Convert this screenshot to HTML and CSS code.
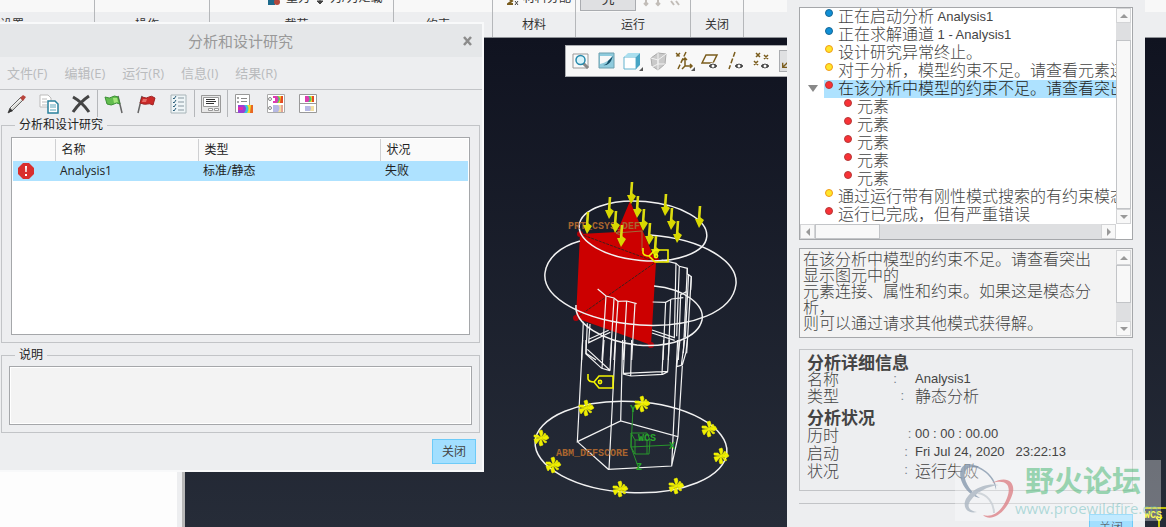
FILE: index.html
```
<!DOCTYPE html>
<html lang="zh-CN">
<head>
    <meta charset="UTF-8">
    <meta name="viewport" content="width=device-width, initial-scale=1.0">
    <title>分析和设计研究</title>
    <link rel="stylesheet" href="styles.css">
</head>
<body>
    <div class="app">
        <header class="ribbon">
            <section class="group group-setup">
                <div class="group-body"></div>
                <div class="group-label">设置</div>
            </section>
            <section class="group group-operate">
                <div class="group-body"></div>
                <div class="group-label">操作</div>
            </section>
            <section class="group group-load">
                <div class="group-body">
                    <svg width="12" height="10" viewBox="0 0 12 10"><path d="M0 3h7v6H0z" fill="#1d6a8c"/><circle cx="9" cy="6" r="3" fill="#b3483c"/></svg>
                    <span>重力</span>
                    <svg width="8" height="10" viewBox="0 0 8 10"><path d="M4 0v6M1 5l3 3 3-3z" stroke="#444" fill="#444"/></svg>
                    <span>力/力矩载</span>
                </div>
                <div class="group-label">载荷</div>
            </section>
            <section class="group group-constraint">
                <div class="group-body"></div>
                <div class="group-label">约束</div>
            </section>
            <section class="group group-material">
                <div class="group-body">
                    <svg width="12" height="10" viewBox="0 0 12 10"><path d="M1 2l4 3-4 3h5" stroke="#7a5c1c" stroke-width="2" fill="none"/><path d="M8 5l3 4M11 5L8 9" stroke="#444"/></svg>
                    <span>材料分配</span>
                </div>
                <div class="group-label">材料</div>
            </section>
            <section class="group group-run">
                <div class="group-body">
                    <button type="button" class="run-button">究</button>
                    <svg width="40" height="10" viewBox="0 0 40 10"><path d="M4 0v5M2 3l2 2 2-2M16 0v5M14 3l2 2 2-2M29 1l3 4M34 1l3 4" stroke="#c2bdb8" stroke-width="2" fill="none"/></svg>
                </div>
                <div class="group-label">运行</div>
            </section>
            <section class="group group-close">
                <div class="group-body"></div>
                <div class="group-label">关闭</div>
            </section>
            <section class="group group-rest">
                <div class="group-body"></div>
                <div class="group-label"></div>
            </section>
        </header>

        <main class="workspace">
            <aside class="model-tree"></aside>
            <div class="viewport">
                <svg class="scene" viewBox="185 38 981 489" preserveAspectRatio="xMinYMin slice">
                    <defs>
                        <g id="load">
                            <path d="M1-21L0-7" stroke="#dcdc10" stroke-width="2.6"/>
                            <path d="M-4-8L0 1l5-8-4-3-1 2z" fill="#d8d800"/>
                        </g>
                        <g id="fixed">
                            <path d="M0 0L-2-7l3-1 1 3zM0 0l6-3 2 3-3 2zM0 0l2 7-3 1-1-3zM0 0l-6 4-1-3zM0 0l-7-1 0-2 4 0zM0 0l6 4-2 1zM0 0l-5 6-1-2zM0 0l4-5 1 2z" fill="#f0f000" stroke="#f0f000" stroke-width=".6"/>
                        </g>
                    </defs>

                    <!-- stressed faces -->
                    <path d="M580 234L617 232 630 201 656 262 651 345 576 318z" fill="#cc0000"/>
                    <path d="M580 234l76 28M576 318l80-56" stroke="#40201c" stroke-dasharray="3 1" fill="none"/>
                    <g fill="#b00008">
                        <circle cx="580" cy="234" r="3"/>
                        <circle cx="576" cy="318" r="3"/>
                        <circle cx="651" cy="345" r="3"/>
                        <circle cx="656" cy="260" r="3"/>
                    </g>

                    <!-- collar edges -->
                    <g fill="none" stroke="#f2f2f2" stroke-width="1.5">
                        <ellipse cx="643" cy="231" rx="64" ry="29.5" transform="rotate(5 643 231)"/>
                        <path d="M650 235C704 239 738 262 736 284C733 312 692 328 640 325C584 321 542 298 545 273C547 257 562 246 580 241"/>
                        <path d="M654 286C685 289 705 305 702 320C698 337 672 348 637 345C603 341 574 324 576 305"/>
                        <ellipse cx="631" cy="447" rx="96" ry="45.5" transform="rotate(3 631 447)"/>
                    </g>

                    <!-- upper body -->
                    <g fill="none" stroke="#f2f2f2" stroke-width="3.6" transform="translate(530 170) scale(.3333)">
                        <path d="M203 357l25 21 24 6 12 10 26-1 30 8M395 270l43 10 10 9 24 6v17l12 8-2 40"/>
                        <path d="M438 280l-5 225M448 289l-8 210M472 295l-12 255M484 320l-14 230M476 312l-10 190"/>
                        <path d="M228 378l-12 192M252 386l-11 184M264 394l-12 176M290 393l-10 177M315 401l-10 169"/>
                        <path d="M368 396l39 1 18-10 35-4M407 397l-8 173M422 388l-7 182M452 375l-7 195"/>
                        <path d="M160 455l-5 115M172 460l-4 90 30 20M180 462l-4 56 65-31M176 508l60-27M366 480l68 23M366 489l68 22M450 375l20-10"/>
                    </g>

                    <!-- lower body -->
                    <g fill="none" stroke="#f2f2f2" stroke-width="3.6" transform="translate(520 340) scale(.3333)">
                        <path d="M188 0L172 305 302 243 474 290 455 378 265 388 172 305M287 0L267 388M308 0L302 243M473 0L455 378M487 78L474 290"/>
                        <path d="M198 0v42l47 43 25 7M202 28l67 62M252 0l-6 85M275 0l-5 92"/>
                        <path d="M315 0l-5 102 23 6 95-5 16-8M335 0l-3 108M312 100l130-6M431 0l-5 102M448 0l-5 95"/>
                        <path d="M480 0l-10 80 17-5 11-38 4-37M494 0l-10 76"/>
                    </g>

                    <g class="csys">
                        <text x="568" y="229">PRT_CSYS_DEF</text>
                        <text x="556" y="456">ABM_DEFSCORE</text>
                    </g>
                    <path d="M642 251v-20l-26 2M622 230l-6 3 6 3" fill="none" stroke="#a06a38"/>

                    <!-- world coordinate system -->
                    <g fill="none" stroke="#28962c">
                        <path d="M633 408l-2 39 40-2M631 447l8 22M631 433h16l3 7-1 14h-14l-4-7zM635 440h12v14M635 440v14M631 433l4 7"/>
                    </g>
                    <g class="wcs">
                        <text x="638" y="441">WCS</text>
                        <text x="630" y="412">Y</text>
                        <text x="669" y="449">X</text>
                        <text x="636" y="470">Z</text>
                    </g>

                    <use href="#load" x="631" y="203"/>
                    <use href="#load" x="609" y="218"/>
                    <use href="#load" x="637" y="217"/>
                    <use href="#load" x="665" y="215"/>
                    <use href="#load" x="587" y="233"/>
                    <use href="#load" x="615" y="232"/>
                    <use href="#load" x="643" y="230"/>
                    <use href="#load" x="671" y="229"/>
                    <use href="#load" x="699" y="227"/>
                    <use href="#load" x="621" y="246"/>
                    <use href="#load" x="649" y="244"/>
                    <use href="#load" x="677" y="242"/>
                    <use href="#load" x="655" y="257"/>

                    <use href="#fixed" x="586" y="408"/>
                    <use href="#fixed" x="642" y="404"/>
                    <use href="#fixed" x="709" y="429"/>
                    <use href="#fixed" x="721" y="456"/>
                    <use href="#fixed" x="676" y="486"/>
                    <use href="#fixed" x="620" y="489"/>
                    <use href="#fixed" x="553" y="465"/>
                    <use href="#fixed" x="541" y="438"/>

                    <g fill="none" stroke="#f4f400" stroke-width="1.6">
                        <path d="M588 374v5q1 3 6 3l5-6h14v12h-14l-5-6"/>
                        <circle cx="600" cy="382" r="1.6"/>
                        <path d="M643 248v5q1 3 6 3l6-6h13v12h-13l-6-6"/>
                        <circle cx="656" cy="256" r="1.6"/>
                        <path d="M1140 508h26M1159 520v7M1156 517l3 4 3-4"/>
                    </g>
                    <text class="wcs-mark" x="1144" y="518">WCS</text>
                </svg>

                <div class="view-tools">
                    <button type="button" aria-label="重新调整"><svg viewBox="0 0 20 20"><path d="M2 3h15v14H2z" fill="#fafafa" stroke="#999"/><path d="M12 12l5 5" stroke="#888" stroke-width="3"/><circle cx="9.500" cy="9" r="4.500" fill="#d8f3fa" stroke="#2689ac" stroke-width="1.500"/></svg></button>
                    <button type="button" aria-label="重画"><svg viewBox="0 0 20 20"><path d="M2 2h15v15H2z" fill="#8fcbdd" stroke="#6d9fae"/><path d="M3 5h12q-3 6-12 8z" fill="#f8f8f8"/><path d="M6 14q4 0 5-4l5-5-2 5q-3 5-8 4z" fill="#164f68"/></svg></button>
                    <button type="button" aria-label="显示样式"><svg viewBox="0 0 20 20"><path d="M1 6h12v12H1z" fill="#fff" stroke="#62b3cf"/><path d="M1 6l4-4h12l-4 4z" fill="#a9deee"/><path d="M13 6l4-4v12l-4 4z" fill="#48a5c5"/><path d="M20 16v4h-4z" fill="#555"/></svg></button>
                    <button type="button" aria-label="截面"><svg viewBox="0 0 20 20"><path d="M2 7l7-5 8 1-1 10-7 6-6-4z" fill="#c9c9c9" stroke="#aaa"/><path d="M2 7l7 2v10M9 9l8-6M9 2v11l7 0M9 13l-6 3" stroke="#f2f2f2" fill="none"/></svg></button>
                    <button type="button" aria-label="基准显示"><svg viewBox="0 0 20 20"><path d="M1 2l4 4M5 2L1 6M11 1L3 18" stroke="#7a5c1c" stroke-width="1.500" stroke-dasharray="5 2"/><path d="M10 8v7h6M10 15l-3 3M8 9l2-2 2 2M15 13l2 2-2 2" stroke="#7a5c1c" stroke-width="1.500" fill="none"/><path d="M20 16v4h-4z" fill="#555"/></svg></button>
                    <button type="button" aria-label="平面显示"><svg viewBox="0 0 20 20"><path d="M1 12L5 4h11l-4 8z" stroke="#7a5c1c" stroke-width="1.500" fill="none"/><path d="M7 15q5-6 10 0-5 6-10 0z" fill="#444" stroke="#fff"/><circle cx="12" cy="15" r="1.500" fill="#fff"/></svg></button>
                    <button type="button" aria-label="轴显示"><svg viewBox="0 0 20 20"><path d="M8 1L2 18" stroke="#7a5c1c" stroke-width="1.500" stroke-dasharray="5 2"/><path d="M7 15q5-6 10 0-5 6-10 0z" fill="#444" stroke="#fff"/><circle cx="12" cy="15" r="1.500" fill="#fff"/></svg></button>
                    <button type="button" aria-label="点显示"><svg viewBox="0 0 20 20"><path d="M3 2l4 4M7 2L3 6M11 4l4 4M15 4l-4 4M1 10l4 4M5 10l-4 4" stroke="#7a5c1c" stroke-width="1.500"/><path d="M7 15q5-6 10 0-5 6-10 0z" fill="#444" stroke="#fff"/><circle cx="12" cy="15" r="1.500" fill="#fff"/></svg></button>
                    <button type="button" class="pressed" aria-label="坐标系显示"><svg viewBox="0 0 20 20"><path d="M3 17l6-6M3 12v5h5" stroke="#7a5c1c" stroke-width="1.500" fill="none"/></svg></button>
                </div>
            </div>
        </main>

        <div class="dialog study-dialog" role="dialog" aria-labelledby="studyTitle">
            <div class="title-bar">
                <h2 id="studyTitle">分析和设计研究</h2>
                <button type="button" class="close-x" aria-label="关闭窗口"><svg width="10" height="10" viewBox="0 0 10 10"><path d="M1 1l7 8M8 1L1 9" stroke="#8c8c8c" stroke-width="2.500"/></svg></button>
            </div>
            <nav class="menu-bar">
                <button type="button">文件(F)</button>
                <button type="button">编辑(E)</button>
                <button type="button">运行(R)</button>
                <button type="button">信息(I)</button>
                <button type="button">结果(R)</button>
            </nav>
            <div class="tool-bar">
                <button type="button" aria-label="编辑"><svg viewBox="0 0 20 20"><path d="M1 19l2-5L14 3l3 2L6 16z" fill="#d8d8d4" stroke="#666"/><path d="M13 4l3-3 3 2-3 4z" fill="#b8443c"/><path d="M1 19l2-5 3 3z" fill="#333"/><path d="M4 14L14 5" stroke="#fff"/></svg></button>
                <button type="button" aria-label="复制"><svg viewBox="0 0 20 20"><path d="M1 1h8l3 3v9H1z" fill="#fff" stroke="#bbb"/><path d="M3 5h5M3 8h5M3 11h5" stroke="#bbb"/><path d="M9 7h7l3 3v9H9z" fill="#fff" stroke="#28809c" stroke-width="1.500"/><path d="M11 11h6M11 13h6M11 16h6" stroke="#5aa4ba"/></svg></button>
                <button type="button" aria-label="删除"><svg viewBox="0 0 20 20"><path d="M2 3q9 5 16 15M18 2Q9 8 2 18" stroke="#444" stroke-width="3" fill="none"/></svg></button>
                <span class="divider"></span>
                <button type="button" aria-label="开始运行"><svg viewBox="0 0 20 20"><path d="M14 2l4 17" stroke="#666" stroke-width="1.500"/><path d="M1 3q5 2 7 0t6 0l2 7q-4-2-6 0t-7 0z" fill="#62bd4e" stroke="#3c8f35"/><path d="M9 4l4 0 1 4-4 1z" fill="#a5e57c"/></svg></button>
                <button type="button" aria-label="停止运行"><svg viewBox="0 0 20 20"><path d="M6 2L2 19" stroke="#666" stroke-width="1.500"/><path d="M6 3q5 2 7 0t6 1l-2 7q-4-2-6-1t-7-1z" fill="#cb2928" stroke="#9e2424"/><path d="M7 5l4 0-1 3-4 0z" fill="#e56b66"/></svg></button>
                <button type="button" aria-label="显示状况"><svg viewBox="0 0 20 20"><path d="M3 1h15v18H3z" fill="#eef5f7" stroke="#a8b4b8"/><path d="M10 4h6M10 8h6M10 12h6M10 16h6" stroke="#8797a0"/><path d="M5 4l1 1 2-3M5 8l1 1 2-3M5 12l1 1 2-3M5 16l1 1 2-3" stroke="#285c78" fill="none"/></svg></button>
                <span class="divider"></span>
                <button type="button" aria-label="诊断"><svg viewBox="0 0 20 20"><path d="M.5 1.500h19v17h-19z" fill="#e8e8e8" stroke="#999"/><path d="M2.500 3.500h15v9h-15z" fill="#fff" stroke="#999"/><path d="M5 5.500h9M5 7.500h10M5 9.500h8" stroke="#333"/><path d="M7.500 14.500h4v2h-4zM13.500 14.500h4v2h-4z" fill="#fff" stroke="#999"/></svg></button>
                <span class="divider"></span>
                <button type="button" aria-label="查看结果"><svg viewBox="0 0 20 20"><path d="M1.500.5h14v18h-14z" fill="#fff" stroke="#999"/><path d="M7 4.500h6M7 7.500h6" stroke="#888"/><circle cx="4" cy="4" r="1" fill="#888"/><circle cx="4" cy="8" r="1" fill="#888"/><path d="M4 11h15v8H4z" fill="#f2df28"/><path d="M4 11h9q3 3 0 8H4z" fill="#38c7dd"/><path d="M4 11h6q4 3 0 8H4z" fill="#9a40d4"/><path d="M4 13h5v3H4z" fill="#e52ba5"/><path d="M17 11h2v8h-3z" fill="#e86724"/></svg></button>
                <button type="button" aria-label="结果列表"><svg viewBox="0 0 20 20"><path d="M1.500.5h17v18h-17z" fill="#fff" stroke="#aaa"/><circle cx="4" cy="5" r="1.500" fill="none" stroke="#888"/><circle cx="4" cy="14" r="1.500" fill="none" stroke="#888"/><path d="M7 2h10v7H7z" fill="#f4d527"/><path d="M7 2h5q4 2 0 7H7z" fill="#48c675"/><path d="M7 2h4q3 3 0 7H7z" fill="#dc3bb1"/><path d="M7 4h2v3H7z" fill="#fff"/><path d="M15 2h2v7h-3z" fill="#e34b25"/><path d="M7 11h10v7H7z" fill="#f2dfa2"/><path d="M7 11h5q3 3 0 7H7z" fill="#b7b9e4"/><path d="M15 11h2v7h-2z" fill="#e5a494"/></svg></button>
                <button type="button" aria-label="结果比较"><svg viewBox="0 0 20 20"><path d="M1.500.5h17v18h-17zM1.500 9.500h17" fill="#fff" stroke="#999"/><path d="M7 2h9v6H7z" fill="#f4d527"/><path d="M7 2h5q3 3 0 6H7z" fill="#48c675"/><path d="M7 2h3q3 3 0 6H7z" fill="#dc3bb1"/><path d="M14 2h2v6h-2z" fill="#e34b25"/><path d="M7 12h9v5H7z" fill="#f2dfa2"/><path d="M7 12h5q2 2 0 5H7z" fill="#b7b9e4"/></svg></button>
            </div>

            <fieldset class="study-set">
                <legend>分析和设计研究</legend>
                <div class="table-box">
                    <table>
                        <colgroup><col class="col-mark"><col class="col-name"><col class="col-type"><col></colgroup>
                        <thead>
                            <tr><th></th><th>名称</th><th>类型</th><th>状况</th></tr>
                        </thead>
                        <tbody>
                            <tr>
                                <td><svg width="16" height="16" viewBox="0 0 16 16"><path d="M5 0h6l5 5v6l-5 5H5l-5-5V5z" fill="#d92f2e"/><path d="M7 3h2l-.3 6H7.300zM7 11h2v2H7z" fill="#fff"/></svg></td>
                                <td>Analysis1</td><td>标准/静态</td><td>失败</td>
                            </tr>
                        </tbody>
                    </table>
                </div>
            </fieldset>
            <fieldset class="note-set">
                <legend>说明</legend>
                <textarea class="note" aria-label="说明" readonly></textarea>
            </fieldset>
            <div class="dialog-actions">
                <button type="button" class="primary">关闭</button>
            </div>
        </div>

        <div class="dialog status-dialog" role="dialog" aria-label="诊断">
            <div class="log-box">
                <ul class="log">
                    <li><i class="dot blue"></i>正在启动分析 <span class="latin">Analysis1</span></li>
                    <li><i class="dot blue"></i>正在求解通道 <span class="latin">1 - Analysis1</span></li>
                    <li><i class="dot yellow"></i>设计研究异常终止。</li>
                    <li><i class="dot yellow"></i>对于分析，模型约束不足。请查看元素连接</li>
                    <li class="selected"><button type="button" class="twisty" aria-label="折叠"></button><i class="dot red"></i>在该分析中模型的约束不足。请查看突出显示</li>
                    <li class="child"><i class="dot red"></i>元素</li>
                    <li class="child"><i class="dot red"></i>元素</li>
                    <li class="child"><i class="dot red"></i>元素</li>
                    <li class="child"><i class="dot red"></i>元素</li>
                    <li class="child"><i class="dot red"></i>元素</li>
                    <li><i class="dot yellow"></i>通过运行带有刚性模式搜索的有约束模态分析</li>
                    <li><i class="dot red"></i>运行已完成，但有严重错误</li>
                </ul>
                <div class="scroll vertical">
                    <button type="button" class="up" aria-label="向上滚动"></button>
                    <div class="track"><div class="thumb log-thumb"></div></div>
                    <button type="button" class="down" aria-label="向下滚动"></button>
                </div>
                <div class="scroll horizontal">
                    <button type="button" class="left" aria-label="向左滚动"></button>
                    <div class="track"><div class="thumb side-thumb"></div></div>
                    <button type="button" class="right" aria-label="向右滚动"></button>
                </div>
            </div>

            <div class="message-box">
                <textarea class="message" rows="5" aria-label="消息" readonly>在该分析中模型的约束不足。请查看突出
显示图元中的
元素连接、属性和约束。如果这是模态分
析，
则可以通过请求其他模式获得解。</textarea>
                <div class="scroll vertical">
                    <button type="button" class="up" aria-label="向上滚动"></button>
                    <div class="track"><div class="thumb message-thumb"></div></div>
                    <button type="button" class="down" aria-label="向下滚动"></button>
                </div>
            </div>

            <div class="details">
                <h3>分析详细信息</h3>
                <dl>
                    <dt>名称</dt><dd class="colon">:     </dd><dd class="latin">Analysis1</dd>
                    <dt>类型</dt><dd class="colon">:   </dd><dd>静态分析</dd>
                </dl>
                <h3>分析状况</h3>
                <dl class="timing">
                    <dt>历时</dt><dd class="colon">: </dd><dd class="latin">00 : 00 : 00.00</dd>
                    <dt>启动</dt><dd class="colon">:  </dd><dd class="latin">Fri Jul 24, 2020   23:22:13</dd>
                    <dt>状况</dt><dd class="colon">:  </dd><dd>运行失败</dd>
                </dl>
            </div>
            <hr>
            <div class="status-actions">
                <button type="button" class="primary">关闭</button>
            </div>
        </div>

        <div class="watermark">
            <svg width="60" height="60" viewBox="0 0 60 60" fill="none">
                <path d="M41 30C43 17 24 3 12 4C-2 8 7 34 25 38C14 32 4 14 13 8C24 4 39 17 41 30z" fill="#8fa0b4"/>
                <path d="M44 25C25 21 4 38 11 49C13 52 17 53 22 52C14 51 11 46 16 40C22 32 33 26 44 25z" fill="#b1bbc6"/>
                <path d="M37 23C53 14 63 23 56 38C49 55 35 62 28 55C38 58 47 51 52 38C57 25 51 19 37 23z" fill="#e08b90"/>
                <path d="M23 33C32 34 39 43 39 53" stroke="#ccd1d7" stroke-width="2"/>
            </svg>
            <div class="watermark-text">
                <strong>野火论坛</strong>
                <span>www.proewildfire.cn</span>
            </div>
        </div>
    </div>
</body>
</html>
```
FILE: styles.css
```
* {
    box-sizing: border-box;
}

body {
    margin: 0;
    font-family: "Open Sans", "Noto Sans CJK SC", sans-serif;
    font-size: 12px;
    line-height: 16px;
    color: #222;
}

button, textarea {
    font: inherit;
    color: inherit;
    margin: 0;
    padding: 0;
    border: none;
    background: none;
}

h2, h3, ul, dl, dd {
    margin: 0;
    padding: 0;
}

.app {
    position: relative;
    display: flex;
    flex-direction: column;
    height: 100vh;
    overflow: hidden;
}

/* ribbon */
.ribbon {
    display: flex;
    flex: none;
    border-bottom: 1px solid #8f9297;
    background-color: #edeef0;
    color: #333;
}

.group {
    flex: none;
    border-right: 1px solid #b5b7ba;
}

.group-body {
    display: flex;
    align-items: flex-end;
    gap: 6px;
    height: 12px;
    padding: 0 4px 6px;
    overflow: hidden;
    background-color: #f8f8f8;
}

.group-label {
    height: 25px;
    line-height: 25px;
    text-align: center;
}

.group-setup { width: 95px; }
.group-setup .group-label { text-align: left; }
.group-operate { width: 115px; }
.group-operate .group-label { padding-right: 10px; }
.group-load { width: 184px; }
.group-load .group-label { padding-right: 10px; }
.group-load .group-body { padding-left: 58px; }
.group-constraint { width: 99px; }
.group-constraint .group-label { padding-right: 10px; }
.group-material { width: 83px; }
.group-material .group-body { padding-left: 14px; gap: 4px; }
.group-run { width: 115px; }
.group-run .group-body { padding-bottom: 1px; }
.group-close { width: 53px; }
.group-rest { flex: 1; border-right: none; }

.group-run svg {
    align-self: flex-start;
}

.run-button {
    width: 56px;
    height: 26px;
    flex: none;
    border: 1px solid #aaacb0;
    background-color: #dfe0e2;
    font-size: 13px;
}

/* workspace */
.workspace {
    display: flex;
    flex: 1;
    min-height: 0;
}

.model-tree {
    width: 185px;
    flex: none;
    background-color: #fdfdfd;
    border-right: 3px solid #b8b8b8;
    box-shadow: inset -5px 0 #edeef0;
}

.viewport {
    position: relative;
    flex: 1;
    overflow: hidden;
    background: linear-gradient(#101320, #262c38);
}

.scene {
    display: block;
    width: 100%;
    height: 100%;
}

.scene text {
    font-family: "Liberation Mono", monospace;
    font-size: 10px;
    font-weight: bold;
}

.csys {
    fill: #a9652f;
}

.wcs {
    fill: #28a52c;
}

.wcs-mark {
    fill: #f4f400;
}

.view-tools {
    position: absolute;
    top: 7px;
    left: 380px;
    display: flex;
    align-items: center;
    gap: 6px;
    height: 32px;
    padding: 0 5px;
    border: 1px solid #aaacb0;
    background-color: #f8f8f8;
}

.view-tools button {
    display: flex;
    width: 20px;
    height: 22px;
    align-items: center;
}

.view-tools svg {
    width: 20px;
    height: 20px;
}

.view-tools .pressed {
    border: 1px solid #aaacb0;
    background-color: #dfe0e2;
}

/* dialogs */
.dialog {
    position: absolute;
    background-color: #edeef0;
}

.primary {
    width: 44px;
    height: 25px;
    border: 1px solid #6dcbf8;
    background-color: #a2dfff;
    color: #444;
}

.study-dialog {
    top: 22px;
    left: 0;
    width: 484px;
    padding-bottom: 6px;
    border: 2px solid #f8f9fa;
    border-left: none;
}

.title-bar {
    display: flex;
    align-items: center;
    height: 33px;
    padding-right: 9px;
    background-color: #e5e7e9;
}

.title-bar h2 {
    flex: 1;
    padding-left: 18px;
    font-size: 15px;
    font-weight: normal;
    text-align: center;
    color: #999;
}

.close-x {
    display: flex;
}

.menu-bar {
    display: flex;
    gap: 17px;
    height: 33px;
    padding-left: 7px;
    border-bottom: 1px solid #c2c4c7;
    font-size: 13px;
    color: #b9bbbd;
}

.tool-bar {
    display: flex;
    align-items: center;
    gap: 12px;
    height: 27px;
    padding-left: 7px;
}

.tool-bar button,
.tool-bar svg {
    display: block;
    width: 20px;
    height: 20px;
}

.divider {
    width: 1px;
    height: 27px;
    margin: 0 -6px;
    background-color: #b5b7ba;
}

fieldset {
    min-width: 0;
    margin: 0 2px 0 1px;
    border: 1px solid #c2c4c7;
}

legend {
    margin-left: 4px;
    padding: 0 4px;
    color: #222;
}

.study-set {
    padding: 4px 9px 7px;
}

.table-box {
    height: 198px;
    padding: 1px;
    border: 1px solid #a5a7aa;
    background-color: #fff;
}

table {
    width: 100%;
    table-layout: fixed;
    border-collapse: collapse;
}

.col-mark { width: 42px; }
.col-name { width: 143px; }
.col-type { width: 182px; }

th, td {
    padding: 0 5px;
    font-weight: normal;
    text-align: left;
}

th {
    height: 22px;
    padding-left: 6px;
    border-right: 1px solid #cfd0d2;
    background-color: #fafafa;
}

th:last-child {
    border-right: none;
}

td {
    height: 20px;
    background-color: #aee2ff;
}

td svg {
    display: block;
}

.note-set {
    margin-top: 4px;
    padding: 3px 7px 7px;
}

.note-set legend {
    margin-left: 6px;
}

.note {
    display: block;
    width: 100%;
    height: 59px;
    border: 1px solid #a5a7aa;
    outline: 1px solid #fff;
    outline-offset: -2px;
    background-color: #f3f3f3;
    resize: none;
}

.dialog-actions {
    display: flex;
    justify-content: flex-end;
    padding: 6px 6px 0 0;
}

/* run status */
.status-dialog {
    top: 0;
    right: 21px;
    bottom: 0;
    width: 358px;
    padding: 7px 12px 0;
    overflow: hidden;
    font-family: "Noto Sans CJK SC", sans-serif;
    font-size: 16px;
    font-weight: 300;
    color: #444;
}

.latin {
    font-family: "Liberation Sans", sans-serif;
    font-size: 13px;
}

.log-box {
    display: grid;
    grid-template-columns: minmax(0, 1fr) 15px;
    padding-right: 1px;
    border: 1px solid #a5a7aa;
    background-color: #fff;
}

.log {
    overflow: hidden;
    list-style: none;
}

.log li {
    position: relative;
    display: flex;
    height: 18px;
    margin-left: 24px;
    padding-left: 1px;
    line-height: 14px;
    white-space: pre;
}

.log .latin {
    line-height: 18px;
}

.log .child {
    padding-left: 20px;
}

.log .selected {
    background-color: #aee2ff;
    color: #222;
}

.dot {
    flex: none;
    width: 8px;
    height: 8px;
    margin: 1px 5px 0 0;
    border: 1px solid;
    border-radius: 50%;
}

.blue { background-color: #0f8fd6; border-color: #176795; }
.yellow { background-color: #ffe62a; border-color: #f29a18; }
.red { background-color: #f93136; border-color: #b53a38; }

/* sits in the indent left of the selected row */
.twisty {
    position: absolute;
    left: -16px;
    top: 5px;
    border: 5px solid transparent;
    border-top: 7px solid #888;
    border-bottom: none;
}

.scroll {
    display: flex;
    background-color: #dedfe1;
}

.vertical {
    flex-direction: column;
    width: 15px;
}

.scroll button {
    display: flex;
    flex: none;
    align-items: center;
    justify-content: center;
    width: 15px;
    height: 15px;
    border: 1px solid #d3d4d6;
    background-color: #f8f8f8;
}

.scroll button::before {
    content: "";
    border: 4px solid transparent;
}

.scroll .up::before { border-bottom-color: #999; border-top: none; }
.scroll .down::before { border-top-color: #999; border-bottom: none; }
.scroll .left::before { border-right-color: #999; border-left: none; }
.scroll .right::before { border-left-color: #999; border-right: none; }

.track {
    display: flex;
    flex: 1;
}

.vertical .track {
    flex-direction: column;
}

.thumb {
    border: 1px solid #c2c4c7;
    background-color: #f8f8f8;
}

.log-thumb { flex: 1; margin-top: 17px; }
.side-thumb { width: 65px; }
.message-thumb { height: 38px; }

.message-box {
    display: flex;
    margin-top: 8px;
    padding: 1px;
    border: 1px solid #a5a7aa;
    background-color: #f3f3f3;
}

.message {
    display: block;
    flex: 1;
    min-width: 0;
    height: 86px;
    padding: 0 2px;
    overflow: hidden;
    resize: none;
    line-height: 16px;
}

.details {
    margin-top: 11px;
    padding: 3px 7px 8px;
    border: 1px solid #c2c4c7;
}

.details h3 {
    font-size: 17px;
    line-height: 17px;
}

.details dl {
    display: grid;
    grid-template-columns: 36px 72px 1fr;
    margin-bottom: 3px;
    line-height: 17px;
    white-space: pre;
}

.details .timing {
    line-height: 18px;
}

.details dl + h3 {
    padding-top: 1px;
}

.colon {
    font-family: "Liberation Sans", sans-serif;
    font-size: 13px;
    text-align: right;
    color: #77838c;
}

hr {
    height: 1px;
    margin: 12px 0 10px;
    border: none;
    background-color: #c2c4c7;
}

.status-actions {
    display: flex;
    justify-content: flex-end;
    font-size: 12px;
}

/* forum mark over the lower right corner */
.watermark {
    position: absolute;
    right: 5px;
    bottom: 6px;
    display: flex;
    width: 206px;
    height: 61px;
    overflow: hidden;
    background-color: rgba(255, 255, 255, 0.4);
    opacity: 0.85;
}

.watermark svg {
    flex: none;
}

.watermark-text {
    display: flex;
    flex-direction: column;
    padding-top: 6px;
}

.watermark strong {
    padding-left: 10px;
    font-size: 29px;
    line-height: 30px;
    color: rgba(90, 190, 130, 0.7);
}

.watermark span {
    font-size: 15px;
    line-height: 24px;
    color: rgba(110, 190, 190, 0.6);
}
```
